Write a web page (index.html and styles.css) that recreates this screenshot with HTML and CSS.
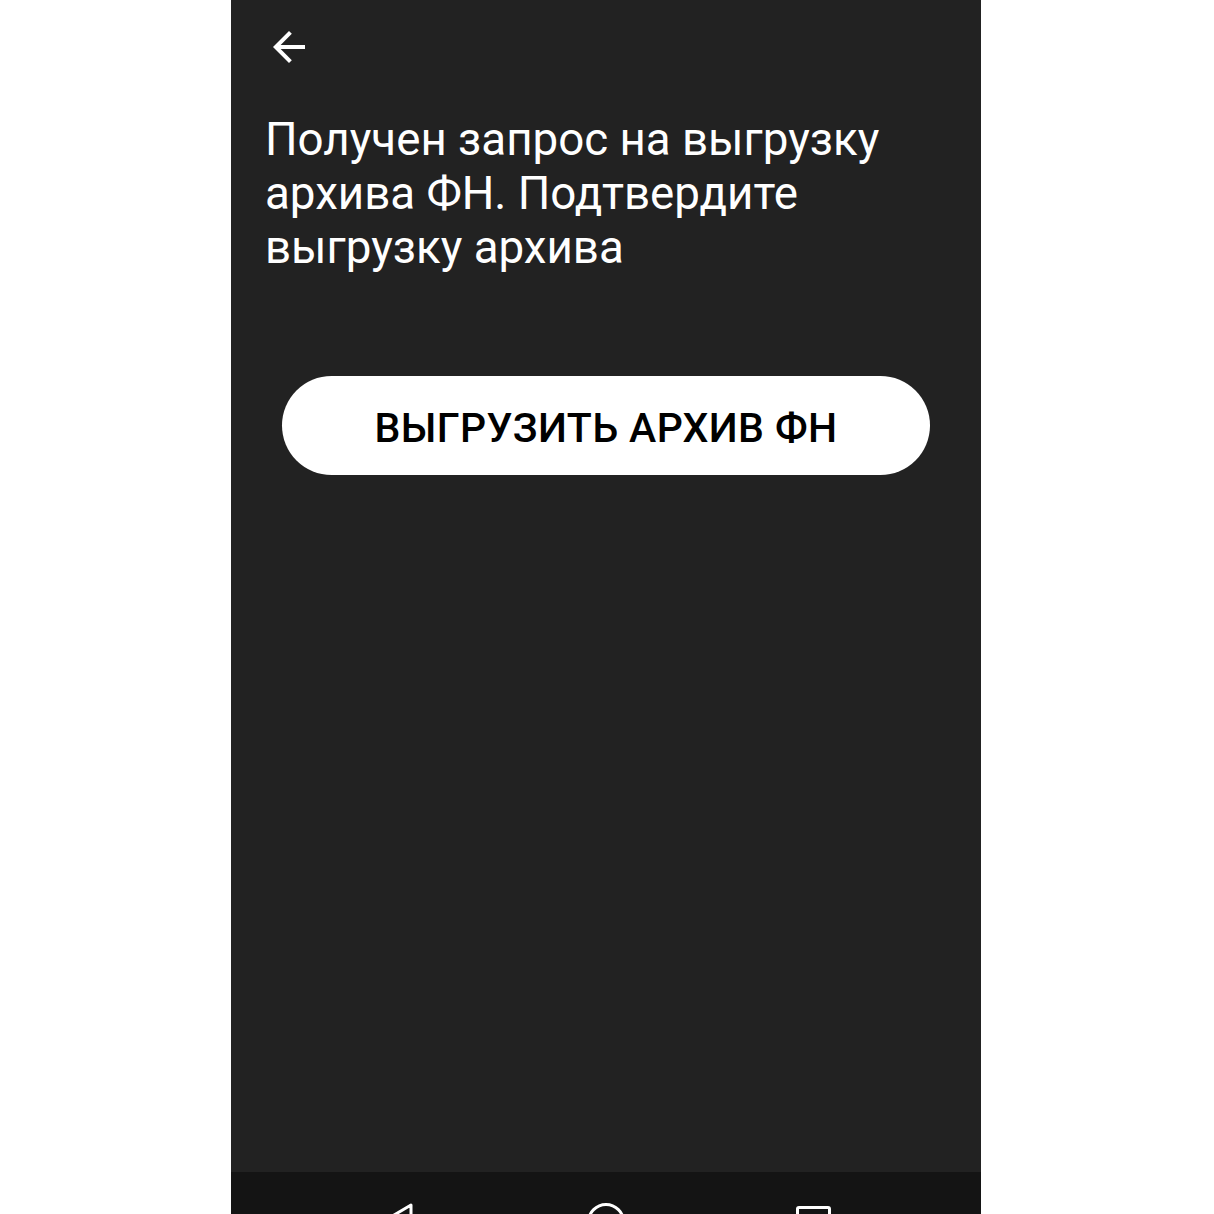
FILE: index.html
```html
<!DOCTYPE html>
<html lang="ru">
<head>
  <meta charset="UTF-8">
  <title>Выгрузка архива ФН</title>
  <link rel="stylesheet" href="styles.css">
</head>
<body>
  <div class="screen">
    <main class="content">
      <header class="toolbar">
        <button class="back" aria-label="Назад">
          <svg viewBox="0 0 24 24" width="48" height="48">
            <path d="M20 11H7.83l5.59-5.59L12 4l-8 8 8 8 1.41-1.41L7.83 13H20v-2z" fill="#fff"/>
          </svg>
        </button>
      </header>

      <p class="message">Получен запрос на выгрузку архива ФН. Подтвердите выгрузку архива</p>

      <button class="action">ВЫГРУЗИТЬ АРХИВ ФН</button>
    </main>

    <!-- системная навигация -->
    <nav class="navbar">
      <svg class="nav-icon" viewBox="0 0 72 72" width="72" height="72">
        <path d="M48 33 L21 49 L48 65 Z" fill="none" stroke="#fff" stroke-width="3" stroke-linejoin="round"/>
      </svg>
      <svg class="nav-icon" viewBox="0 0 72 72" width="72" height="72">
        <circle cx="36" cy="50" r="17.5" fill="none" stroke="#fff" stroke-width="3"/>
      </svg>
      <svg class="nav-icon" viewBox="0 0 72 72" width="72" height="72">
        <rect x="20.5" y="35.5" width="32" height="32" rx="1.5" fill="none" stroke="#fff" stroke-width="3"/>
      </svg>
    </nav>
  </div>
</body>
</html>
```

FILE: styles.css
```css
* { box-sizing: border-box; margin: 0; padding: 0; }
html, body { height: 100%; background: #fff; overflow: hidden; }
body { font-family: Roboto, "Noto Sans", sans-serif; }

.screen {
  width: 750px; height: 1214px;
  margin-left: 231px;
  background: #222222;
  display: flex; flex-direction: column;
  overflow: hidden;
}

.content { height: 1172px; flex: none; padding: 23px 34px 0; }

.toolbar { height: 48px; display: flex; align-items: center; }
.back {
  width: 48px; height: 48px;
  border: none; background: transparent; cursor: pointer;
  display: flex;
}

.message {
  margin-top: 42px;
  color: #fff;
  font-size: 45.7px; line-height: 54px;
  font-weight: 400;
}

.action {
  display: block;
  width: 648px; height: 99px;
  margin: 101px 0 0 17px;
  padding-top: 4px;
  border: none; border-radius: 50px;
  background: #fff; color: #000;
  font-family: Roboto, sans-serif;
  font-size: 41px; font-weight: 500;
  letter-spacing: 0.4px;
  cursor: pointer;
}

.navbar {
  height: 72px; flex: none;
  background: #141414;
  display: flex; justify-content: center; gap: 135px;
}
.nav-icon { display: block; }
```
